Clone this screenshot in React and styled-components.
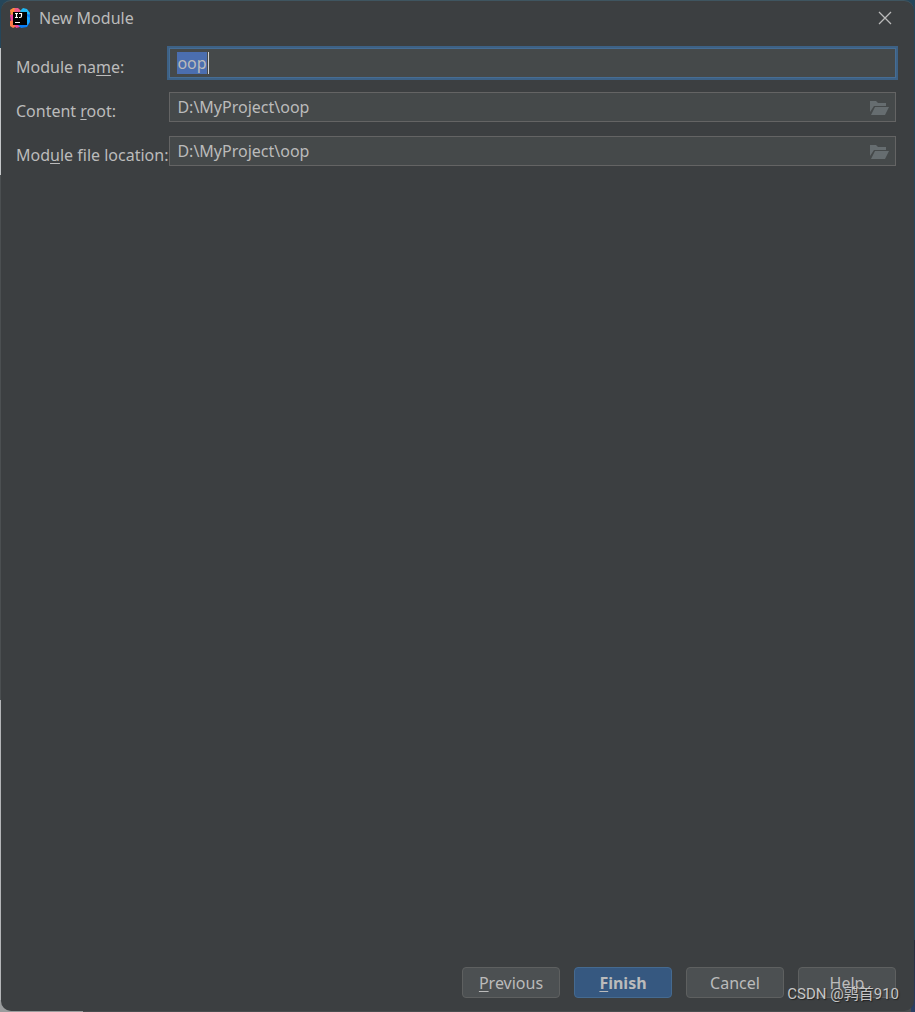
import { useEffect, useRef } from "react";
import styled, { createGlobalStyle, css } from "styled-components";

const GlobalStyle = createGlobalStyle`
  * {
    box-sizing: border-box;
  }

  body {
    margin: 0;
    background:
      linear-gradient(#232c3c, #2b3f63) right 0 bottom 0 / 4px 72px no-repeat,
      linear-gradient(90deg, #9a9c9d 83px, #4a4d4f 83px) left bottom / 100% 12px no-repeat,
      linear-gradient(
          #25465a 48px,
          #c4c6c8 48px,
          #c4c6c8 175px,
          #4b4f51 175px,
          #4b4f51 700px,
          #b4b6b8 700px
        )
        left top / 12px 100% no-repeat,
      #25465a;
    font-family: "Noto Sans", "Noto Sans CJK SC", sans-serif;
    font-size: 16px;
    color: #bbbbbb;
  }
`;

const Dialog = styled.main`
  position: relative;
  display: flex;
  flex-direction: column;
  min-height: calc(100vh - 1px);
  margin: 0 1px 1px;
  border-top: 1px solid #3f5560;
  border-radius: 10px;
  background-color: #3c3f41;
`;

const TitleBar = styled.header`
  display: flex;
  align-items: center;
  gap: 8px;
  height: 34px;
  padding: 0 20px 0 8px;
`;

const Title = styled.h1`
  flex: 1;
  margin: 0;
  font-size: 16px;
  font-weight: 400;
`;

const CloseButton = styled.button`
  display: flex;
  padding: 2px;
  border: 0;
  background: none;
  color: #bbbbbb;
`;

const Form = styled.form`
  flex: 1;
  display: flex;
  flex-direction: column;
  justify-content: space-between;
  padding: 13px 18px 13px 15px;
`;

const Fields = styled.div`
  display: grid;
  grid-template-columns: auto 1fr;
  column-gap: 1px;
  row-gap: 14px;
`;

const Label = styled.label`
  height: 30px;
  padding-top: 7px;
  line-height: 24px;
`;

const Mnemonic = styled.span`
  text-decoration: underline;
  text-decoration-thickness: 1px;
  text-decoration-skip-ink: none;
  text-underline-offset: 2px;
`;

const FieldBox = styled.div`
  position: relative;
  display: flex;
  align-items: center;
  height: 30px;
  padding-right: 6px;
  border: 1px solid #646464;
  background-color: #45494a;

  ${({ $active }) =>
    $active &&
    css`
      border-color: #466d94;
      box-shadow: 0 0 0 2px #3d6185;
    `}
`;

const TextInput = styled.input`
  flex: 1;
  min-width: 0;
  height: 24px;
  padding: 0 7px;
  border: 0;
  outline: 0;
  background: none;
  font: inherit;
  line-height: 22px;
  color: inherit;

  &::selection {
    background-color: #4b6eaf;
    color: #bbbbbb;
  }
`;

const Caret = styled.span`
  position: absolute;
  top: 3px;
  left: 38px;
  width: 1px;
  height: 22px;
  background-color: #d0d0d0;
`;

const BrowseButton = styled.button`
  display: flex;
  padding: 2px 0 0;
  border: 0;
  background: none;
  color: #666d70;
`;

const Actions = styled.footer`
  display: flex;
  justify-content: flex-end;
  gap: 14px;
`;

const Button = styled.button`
  width: 98px;
  height: 31px;
  padding: 1px 0 0;
  border: 1px solid ${({ $primary }) => ($primary ? "#456a90" : "#5e6060")};
  border-radius: 4px;
  background-color: ${({ $primary }) => ($primary ? "#365880" : "#4c5052")};
  font: inherit;
  font-weight: ${({ $primary }) => ($primary ? 700 : 400)};
  color: #bbbbbb;
`;

const Watermark = styled.span`
  position: absolute;
  right: 15px;
  bottom: 6px;
  font-family: Roboto, "Noto Sans CJK SC", sans-serif;
  font-size: 15px;
  line-height: 22px;
  color: #c6c6c6;
  text-shadow: 1px 1px 1px #222222;
  pointer-events: none;
`;

const Logo = () => (
  <svg width="22" height="22" viewBox="0 0 22 22" aria-hidden="true">
    <path d="M1 3 4 1h4l4 3-5 7H2z" fill="#fd8a3c" />
    <path d="M6 1h3l3 3-4 3-3-3z" fill="#f0588a" />
    <path d="m1 8 5-1v8H2z" fill="#f0439c" />
    <path d="m1 14 5-1 6 5-2 2H6l-2 1-3-2z" fill="#fc7a4a" />
    <path d="m5 17 8-1-2 4-4 1z" fill="#f0439c" />
    <path d="m11 4 3-3 4 1 3 4-1 5h-4z" fill="#1fb8f5" />
    <path d="m16 6 5 2v7l-3 5-6 1-3-3z" fill="#0a7cf5" />
    <path d="m18 9 3 2-1 5-3 3z" fill="#18a6fb" />
    <path d="M4 5h14v13H4z" fill="#000" />
    <path
      d="M6 6.500h3M7.500 6v5M6 10.500h3M10 6.500h2.500V9q0 1.500-1.500 1.500h-1M6 15.500h5"
      fill="none"
      stroke="#fff"
      strokeWidth="1.200"
    />
  </svg>
);

const CloseIcon = () => (
  <svg width="14" height="14" viewBox="0 0 14 14" aria-hidden="true">
    <path d="m1 1 12 12M13 1 1 13" stroke="currentColor" strokeWidth="1.300" />
  </svg>
);

const FolderIcon = () => (
  <svg width="19" height="16" viewBox="0 0 19 16" aria-hidden="true">
    <path d="M0 1h6l2 2h8v3H4L0 12z" fill="currentColor" />
    <path d="M5 7h14l-4 8H1z" fill="currentColor" />
  </svg>
);

const Field = ({ id, label, value, active, browse }) => {
  const input = useRef(null);

  useEffect(() => {
    if (active) {
      input.current.focus();
      input.current.select();
    }
  }, [active]);

  return (
    <>
      <Label htmlFor={id}>{label}</Label>
      <FieldBox $active={active}>
        <TextInput id={id} ref={input} type="text" defaultValue={value} />
        {active && <Caret />}
        {browse && (
          <BrowseButton type="button" aria-label="Browse">
            <FolderIcon />
          </BrowseButton>
        )}
      </FieldBox>
    </>
  );
};

function App() {
  return (
    <>
      <GlobalStyle />
      <Dialog>
        <TitleBar>
          <Logo />
          <Title>New Module</Title>
          <CloseButton type="button" aria-label="Close">
            <CloseIcon />
          </CloseButton>
        </TitleBar>
        <Form>
          <Fields>
            <Field
              id="module-name"
              label={<>Module na<Mnemonic>m</Mnemonic>e:</>}
              value="oop"
              active
            />
            <Field
              id="content-root"
              label={<>Content <Mnemonic>r</Mnemonic>oot:</>}
              value="D:\MyProject\oop"
              browse
            />
            <Field
              id="module-file-location"
              label={<>Mod<Mnemonic>u</Mnemonic>le file location:</>}
              value="D:\MyProject\oop"
              browse
            />
          </Fields>
          <Actions>
            <Button type="button"><Mnemonic>P</Mnemonic>revious</Button>
            <Button type="button" $primary><Mnemonic>F</Mnemonic>inish</Button>
            <Button type="button">Cancel</Button>
            <Button type="button">Help</Button>
          </Actions>
        </Form>
        <Watermark>CSDN @鹑首910</Watermark>
      </Dialog>
    </>
  );
}

export default App;
